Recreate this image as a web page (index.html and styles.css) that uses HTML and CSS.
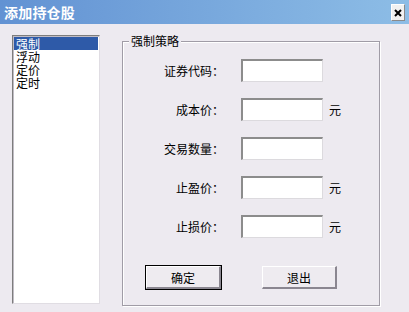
FILE: index.html
```html
<!DOCTYPE html>
<html>
<head>
<meta charset="utf-8">
<link rel="stylesheet" href="styles.css">
</head>
<body>
<div class="window">
  <div class="titlebar">
    <span class="title">添加持仓股</span>
    <span class="close">
      <svg width="8" height="8" viewBox="0 0 8 8"><path d="M1 1L7 7M7 1L1 7" stroke="#000" stroke-width="2"/></svg>
    </span>
  </div>
  <div class="content">
    <ul class="list">
      <li class="selected">强制</li>
      <li>浮动</li>
      <li>定价</li>
      <li>定时</li>
    </ul>
    <div class="group">
      <span class="legend">强制策略</span>
      <div class="form">
        <label>证券代码：</label><span class="input"></span><span class="unit"></span>
        <label>成本价：</label><span class="input"></span><span class="unit">元</span>
        <label>交易数量：</label><span class="input"></span><span class="unit"></span>
        <label>止盈价：</label><span class="input"></span><span class="unit">元</span>
        <label>止损价：</label><span class="input"></span><span class="unit">元</span>
      </div>
      <div class="buttons">
        <button class="btn default">确定</button>
        <button class="btn">退出</button>
      </div>
    </div>
  </div>
</div>
</body>
</html>
```

FILE: styles.css
```css
* { box-sizing: border-box; }
html, body { margin: 0; padding: 0; }
body {
  width: 409px;
  height: 312px;
  overflow: hidden;
  background: #edeaf0;
  font-family: "Noto Sans CJK SC", "DejaVu Sans", sans-serif;
  font-size: 12px;
  color: #000;
}
.window { width: 409px; height: 312px; display: flex; flex-direction: column; }
.titlebar {
  height: 24px;
  flex: none;
  background: linear-gradient(to right, #6292d3, #8dbde6);
  display: flex;
  align-items: center;
  justify-content: space-between;
  padding: 0 4px 0 4px;
}
.title {
  color: #fff;
  font-weight: bold;
  font-size: 14px;
  line-height: 16px;
  letter-spacing: 0.2px;
}
.close {
  width: 14px;
  height: 17px;
  margin-top: 1px;
  background: #f1f1f1;
  border-top: 1px solid #fff;
  border-left: 1px solid #fff;
  border-right: 1px solid #8a8a8a;
  border-bottom: 1px solid #8a8a8a;
  display: flex;
  align-items: center;
  justify-content: center;
}
.content {
  display: flex;
  align-items: flex-start;
  padding: 11px 0 0 12px;
}
.list {
  list-style: none;
  margin: 0;
  padding: 1px;
  width: 88px;
  height: 269px;
  background: #fff;
  border-top: 1px solid #7d7d7d;
  border-left: 1px solid #7d7d7d;
  border-right: 1px solid #e0dde3;
  border-bottom: 1px solid #e0dde3;
  box-shadow: inset 1px 1px 0 #c0bcc4;
}
.list li {
  height: 13px;
  line-height: 13px;
  padding-left: 2px;
}
.list li.selected {
  background: #2e5aa8;
  color: #fff;
}
.group {
  position: relative;
  margin: 6px 0 0 22px;
  width: 258px;
  height: 265px;
  border: 1px solid #a09ca6;
  box-shadow: inset 1px 1px 0 #fff, 1px 1px 0 #fff;
  padding: 17px 0 0 0;
}
.legend {
  position: absolute;
  top: -8px;
  left: 6px;
  padding: 0 2px;
  background: #edeaf0;
  line-height: 14px;
}
.form {
  display: grid;
  grid-template-columns: 101px 82px auto;
  grid-auto-rows: 23px;
  row-gap: 16px;
  column-gap: 0;
  align-items: center;
}
.form label {
  text-align: right;
  padding-right: 0;
}
.input {
  display: block;
  margin-left: 17px;
  width: 82px;
  height: 23px;
  background: #fff;
  border-top: 2px solid #8c8c8c;
  border-left: 2px solid #8c8c8c;
  border-right: 1px solid #dcdade;
  border-bottom: 1px solid #dcdade;
}
.form .input { margin-left: 0; }
.form { grid-template-columns: 118px 82px auto; }
.form label { padding-right: 17px; }
.unit { padding-left: 6px; }
.buttons {
  display: flex;
  gap: 41px;
  margin-top: 28px;
  padding-left: 23px;
}
.btn {
  width: 75px;
  height: 23px;
  margin: 0;
  padding: 0;
  font-family: inherit;
  font-size: 12px;
  background: #eeebf0;
  border-top: 1px solid #fff;
  border-left: 1px solid #fff;
  border-right: 2px solid #8a8690;
  border-bottom: 2px solid #8a8690;
  color: #000;
}
.btn.default {
  outline: 1px solid #000;
  outline-offset: 0;
}
```
